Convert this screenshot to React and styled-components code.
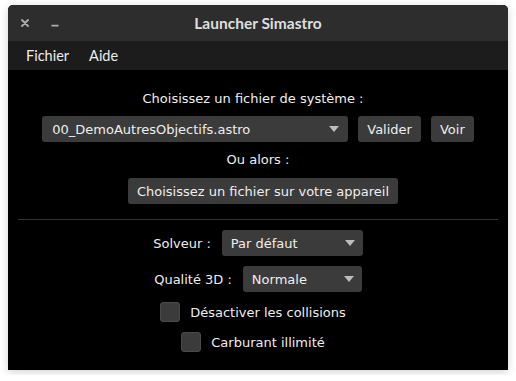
import React, { useState } from "react";
import styled, { createGlobalStyle } from "styled-components";

const GlobalStyle = createGlobalStyle`
  body {
    margin: 0;
    background: #ffffff;
    font-family: "DejaVu Sans", sans-serif;
  }
`;

export default function App() {
  const [collisions, setCollisions] = useState(false);
  const [fuel, setFuel] = useState(false);

  return (
    <>
      <GlobalStyle />
      <Window>
        <TitleBar>
          <Controls>
            <ControlButton aria-label="close">
              <svg width="8" height="8" viewBox="0 0 8 8">
                <path d="M1 1 L7 7 M7 1 L1 7" stroke="#adadad" strokeWidth="1.8" strokeLinecap="round" />
              </svg>
            </ControlButton>
            <ControlButton aria-label="minimize">
              <svg width="9" height="8" viewBox="0 0 9 8">
                <path d="M0.5 7 L8.5 7" stroke="#adadad" strokeWidth="1.8" />
              </svg>
            </ControlButton>
          </Controls>
          <Title>Launcher Simastro</Title>
          <span />
        </TitleBar>

        <MenuBar>
          <MenuItem>Fichier</MenuItem>
          <MenuItem>Aide</MenuItem>
        </MenuBar>

        <Content>
          <Label $shift={-5}>Choisissez un fichier de système :</Label>
          <Row $top={8}>
            <Select $width={306} $pad={10} $arrow={14}>
              <span>00_DemoAutresObjectifs.astro</span>
              <Arrow />
            </Select>
            <Button>Valider</Button>
            <Button>Voir</Button>
          </Row>
          <Label $top={9}>Ou alors :</Label>
          <Button $top={9} $shift={5}>
            Choisissez un fichier sur votre appareil
          </Button>

          <Separator />

          <Row $top={10} $gap={11}>
            <FieldLabel>Solveur :</FieldLabel>
            <Select $width={141} $pad={9} $arrow={13}>
              <span>Par défaut</span>
              <Arrow />
            </Select>
          </Row>
          <Row $top={10} $gap={11}>
            <FieldLabel>Qualité 3D :</FieldLabel>
            <Select $width={119} $pad={9} $arrow={13}>
              <span>Normale</span>
              <Arrow />
            </Select>
          </Row>

          <CheckRow $top={10} onClick={() => setCollisions(!collisions)}>
            <Box $checked={collisions} />
            <span>Désactiver les collisions</span>
          </CheckRow>
          <CheckRow $top={10} onClick={() => setFuel(!fuel)}>
            <Box $checked={fuel} />
            <span>Carburant illimité</span>
          </CheckRow>
        </Content>
      </Window>
    </>
  );
}

const Arrow = () => (
  <svg width="10" height="6" viewBox="0 0 10 6">
    <path d="M0 0 L10 0 L5 6 Z" fill="#bdbdbd" />
  </svg>
);

const Window = styled.div`
  width: 500px;
  height: 365px;
  margin: 5px 8px;
  display: flex;
  flex-direction: column;
  border-radius: 5px 5px 0 0;
  overflow: hidden;
  background: #000000;
  box-shadow: 0 2px 8px rgba(0, 0, 0, 0.18);
`;

const TitleBar = styled.div`
  height: 36px;
  flex: none;
  display: grid;
  grid-template-columns: 1fr auto 1fr;
  align-items: center;
  background: #2d2d2d;
`;

const Controls = styled.div`
  display: flex;
  align-items: center;
  gap: 22px;
  padding-left: 13px;
`;

const ControlButton = styled.div`
  width: 8px;
  height: 8px;
  display: flex;
  align-items: center;
  justify-content: center;
`;

const Title = styled.div`
  font-family: "Lato", "DejaVu Sans", sans-serif;
  font-weight: 700;
  font-size: 15.5px;
  color: #dedede;
`;

const MenuBar = styled.div`
  height: 29px;
  flex: none;
  display: flex;
  align-items: center;
  gap: 20px;
  padding-left: 18px;
  background: #1c1c1c;
`;

const MenuItem = styled.div`
  font-family: "Lato", "DejaVu Sans", sans-serif;
  font-size: 14.5px;
  color: #ececec;
`;

const Content = styled.div`
  flex: 1;
  display: flex;
  flex-direction: column;
  align-items: center;
  padding-top: 20px;
  font-size: 13px;
  color: #eeeeee;
`;

const Label = styled.div`
  line-height: 18px;
  margin-top: ${(p) => p.$top || 0}px;
  transform: translateX(${(p) => p.$shift || 0}px);
`;

const Row = styled.div`
  display: flex;
  align-items: center;
  gap: ${(p) => p.$gap || 10}px;
  margin-top: ${(p) => p.$top || 0}px;
`;

const FieldLabel = styled.span`
  white-space: nowrap;
`;

const Select = styled.div`
  width: ${(p) => p.$width}px;
  height: 26px;
  box-sizing: border-box;
  display: flex;
  align-items: center;
  justify-content: space-between;
  padding: 0 ${(p) => p.$arrow - 5}px 0 ${(p) => p.$pad}px;
  border-radius: 3px;
  background: #3b3b3b;
`;

const Button = styled.div`
  height: 26px;
  box-sizing: border-box;
  display: flex;
  align-items: center;
  padding: 0 9px;
  border-radius: 3px;
  background: #3b3b3b;
  white-space: nowrap;
  margin-top: ${(p) => p.$top || 0}px;
  transform: translateX(${(p) => p.$shift || 0}px);
`;

const Separator = styled.div`
  align-self: stretch;
  height: 1px;
  margin: 15px 10px 0;
  background: #333333;
`;

const CheckRow = styled.label`
  display: flex;
  align-items: center;
  gap: 10px;
  margin-top: ${(p) => p.$top || 0}px;
  transform: translateX(-5px);
  cursor: pointer;
`;

const Box = styled.span`
  width: 20px;
  height: 20px;
  box-sizing: border-box;
  border-radius: 3px;
  border: 1px solid #4a4a4a;
  background: ${(p) => (p.$checked ? "#5a5a5a" : "#3b3b3b")};
`;
